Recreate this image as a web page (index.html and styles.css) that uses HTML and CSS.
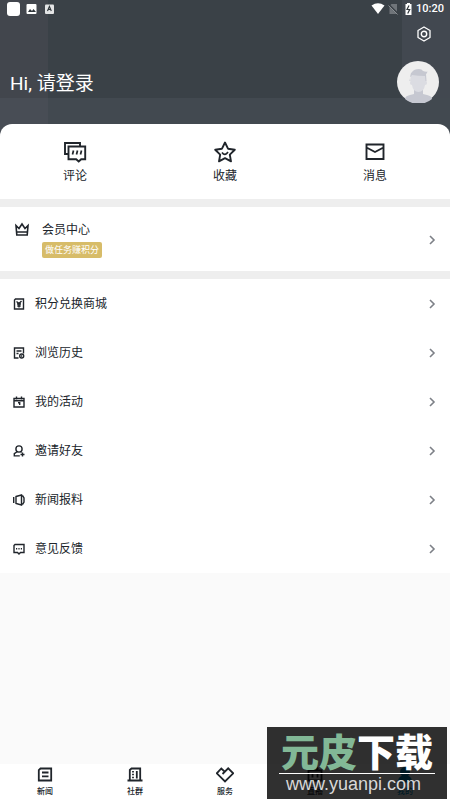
FILE: index.html
```html
<!DOCTYPE html>
<html lang="zh-CN">
<head>
<meta charset="utf-8">
<meta name="viewport" content="width=device-width, initial-scale=1">
<title>我的</title>
<link rel="stylesheet" href="styles.css">
</head>
<body>
<svg class="defs" aria-hidden="true">
  <symbol id="chevron" viewBox="0 0 8 10"><path d="M2 1l4 4-4 4" fill="none" stroke="#7d8087" stroke-width="1.6"/></symbol>
</svg>
<header class="hero">
  <div class="status">
    <svg width="60" height="18" viewBox="0 0 60 18" aria-hidden="true">
      <rect x="7" y="2" width="13" height="14" rx="3" fill="#fff"/>
      <rect x="26.500" y="4" width="10" height="10" rx="1" fill="#fff"/>
      <path d="M28 12l2-3 2 2 1.500-2 2.500 3z" fill="#30363b"/>
      <rect x="45" y="4.500" width="9" height="9.500" rx="1" fill="#e4e5e6"/>
      <path d="M47.500 11L49.400 6.500l1.900 4.500M48.200 9.500h2.400" fill="none" stroke="#30363b" stroke-width="1.100"/>
    </svg>
    <div class="status-right">
      <svg width="44" height="14" viewBox="0 0 44 14" aria-hidden="true">
        <path d="M3.500 3.500Q10-.8 16.500 3.500L10 12z" fill="#fff"/>
        <path d="M21.500 4l2-2H29v10h-7.500z" fill="#70757a"/>
        <path d="M20.500 2.500l9.500 9.500" stroke="#3b4147" stroke-width="2"/><path d="M20.500 3.500l9 9" stroke="#8b8f93"/>
        <path d="M37.500 2H39V1h3v1h1.500v11h-6z" fill="#fff"/>
        <path d="M41 3.500l-2 4h2.700l-2 4" fill="none" stroke="#30363b" stroke-width="1.200"/>
      </svg>
      <span>10:20</span>
    </div>
  </div>
  <div class="tools">
    <button class="plain" aria-label="设置">
      <svg width="16" height="16" viewBox="0 0 16 16"><path d="M8 1l6 3.500v7L8 15l-6-3.500v-7z" fill="none" stroke="#fff" stroke-width="1.300" stroke-linejoin="round"/><circle cx="8" cy="8" r="2.700" fill="none" stroke="#fff" stroke-width="1.400"/></svg>
    </button>
  </div>
  <div class="profile">
    <a class="login" href="#">Hi, 请登录</a>
    <svg class="avatar" width="42" height="42" viewBox="0 0 42 42" role="img" aria-label="头像">
      <circle cx="21" cy="21" r="21" fill="#eee"/>
      <path d="M8 38q0-3 5-4l4-1v-5h9v5l4 1q5 1 5 4A21 21 0 0 1 8 38z" fill="#c6c8d1"/>
      <path d="M14 14h15v6q1 0 1 2t-2 2q-1 7-6.500 7T15 24q-2 0-2-2t1-2z" fill="#dbdce2"/>
      <path d="M13.500 20q-1-7 1.500-9 2-3 7-3 3 0 4 2 3 1 4.500.500-.500 2-1.500 2.500l.5 7h-1l-.500-5q-7 0-13-1-2 2-2.500 6z" fill="#c6c8d1"/>
    </svg>
  </div>
</header>
<main>
  <nav class="shortcuts" aria-label="快捷入口">
    <a href="#">
      <svg width="24" height="22" viewBox="0 0 24 22"><path d="M5 13H2V2h15v3M5.500 5.500h16.700v12.700h-4l-2.500 2.300-2.500-2.300H5.500z" fill="none" stroke="#20252b" stroke-width="1.900"/><path d="M10.500 9.500l-1 4M14.500 9.500l-1 4M18.500 9.500l-1 4" stroke="#20252b" stroke-width="1.700"/></svg>
      <span>评论</span>
    </a>
    <a href="#">
      <svg width="24" height="22" viewBox="0 0 24 22"><path d="M12 1.500l3 6.200 6.800 1-5 4.900 1.200 6.700-6-3.100-6 3.100 1.200-6.700-5-4.900 6.800-1z" fill="none" stroke="#20252b" stroke-width="1.900" stroke-linejoin="round"/><path d="M9 11.500q3 4 6-.5" fill="none" stroke="#20252b" stroke-width="1.700"/></svg>
      <span>收藏</span>
    </a>
    <a href="#">
      <svg width="24" height="22" viewBox="0 0 24 22"><path d="M3.500 3.500h17v14.500h-17zM3.500 6.500l8.500 4.500L20.500 6.500" fill="none" stroke="#20252b" stroke-width="1.900"/></svg>
      <span>消息</span>
    </a>
  </nav>
  <a class="member" href="#">
    <svg class="crown" width="16" height="16" viewBox="0 0 16 16"><path d="M2 4.500l3 3 3-4.500 3 4.500 3-3-.8 9.500H2.800zM2.500 11h11" fill="none" stroke="#20252b" stroke-width="1.600"/></svg>
    <span class="member-text"><span>会员中心</span><span class="tag">做任务赚积分</span></span>
    <svg class="chevron"><use href="#chevron"/></svg>
  </a>
  <ul class="menu">
    <li><a href="#"><svg class="icon" viewBox="0 0 12 12"><path d="M2.500 1h8v10h-9V2z"/><path d="M3.500 3.500L6 5.500l2.500-2.500M6 5.500v4M4 6h4M4.300 8h3.400"/></svg><span>积分兑换商城</span><svg class="chevron"><use href="#chevron"/></svg></a></li>
    <li><a href="#"><svg class="icon" viewBox="0 0 12 12"><path d="M5.500 11H1.500V1h9v5.500M3.500 4h5M3.500 6.500h2"/><circle cx="8.700" cy="9" r="2"/><path d="M8 8.500l1 1"/></svg><span>浏览历史</span><svg class="chevron"><use href="#chevron"/></svg></a></li>
    <li><a href="#"><svg class="icon" viewBox="0 0 12 12"><path d="M1 2.500h10v8.500H1zM1 4.700h10M3.500.5v3M8.500.5v3M5 6.700h1.700V9"/></svg><span>我的活动</span><svg class="chevron"><use href="#chevron"/></svg></a></li>
    <li><a href="#"><svg class="icon" viewBox="0 0 12 12"><circle cx="6" cy="4" r="3.100"/><path d="M4.500 6.500L1.300 8.700v2.200h5.500M8 7l.5.500M9.500 7.500v4M7.500 9.500h4"/></svg><span>邀请好友</span><svg class="chevron"><use href="#chevron"/></svg></a></li>
    <li><a href="#"><svg class="icon" viewBox="0 0 12 12"><path d="M.7 3v6M3 2.500L8.500 1v10L3 9.500zM8.500 2h1.300L11 4v4L9.800 10H8.500"/></svg><span>新闻报料</span><svg class="chevron"><use href="#chevron"/></svg></a></li>
    <li><a href="#"><svg class="icon" viewBox="0 0 12 12"><path d="M2 1.500h9v8H7.500L6 11 4.500 9.500H1v-7z"/><path d="M3 5.800h1.200M5.400 5.800h1.200M7.800 5.800H9"/></svg><span>意见反馈</span><svg class="chevron"><use href="#chevron"/></svg></a></li>
  </ul>
</main>
<nav class="tabs" aria-label="主导航">
  <a href="#"><svg viewBox="0 0 18 18"><path d="M4.500 2.500H15.200v12H2.800v-10.300z"/><path d="M6 6.500h6.500M6 10.300h6.500"/></svg><span>新闻</span></a>
  <a href="#"><svg viewBox="0 0 18 18"><path d="M1.500 14.500h15M3.800 14.500V4l1.700-1.500h8.700v12"/><path d="M7 5v1.500M7 7.800v1.500M7 10.700v1.500M10.800 5v7.500"/></svg><span>社群</span></a>
  <a href="#"><svg viewBox="0 0 18 18"><path d="M6.500 8l5.700-5.700 5 5L9 15.500 .8 7.300l4.500-4.800L8.500 5.500"/></svg><span>服务</span></a>
  <a href="#"><svg viewBox="0 0 18 18"><path d="M2.500 4.500h13v10h-13zM6 1.500l1.500 3M12 1.500l-1.500 3M6.500 7.500v4M11.500 7.500v4"/></svg><span>直播</span></a>
  <a class="active" href="#" aria-current="page"><svg viewBox="0 0 18 18"><circle cx="9" cy="6" r="4"/><path d="M3 15.500q0-5 6-5t6 5z"/></svg><span>我的</span></a>
</nav>
<aside class="watermark">
  <div class="brand"><span>元皮</span>下载</div>
  <div class="site">www.yuanpi.com</div>
</aside>
</body>
</html>
```
FILE: styles.css
```css
* { box-sizing: border-box; }
body {
  margin: 0;
  min-height: 100vh;
  display: flex;
  flex-direction: column;
  position: relative;
  background: #fafafa;
  color: #20252b;
  font: 12px/18px Roboto, "Noto Sans CJK SC", sans-serif;
}
a { color: inherit; text-decoration: none; }
svg { display: block; flex: none; }
.defs { position: absolute; width: 0; height: 0; }

.hero {
  padding-bottom: 34px;
  color: #fff;
  background:
    linear-gradient(#484d55, #484d55) 0 98px / 48px 100% no-repeat,
    linear-gradient(#424950, #424950) 0 98px / 100% 100% no-repeat,
    linear-gradient(#42464d, #42464d) 0 0 / 48px 100% no-repeat,
    linear-gradient(#424850, #424850) 100% 0 / 48px 100% no-repeat,
    #3a4147;
}
.status {
  display: flex;
  justify-content: space-between;
  height: 18px;
}
.status-right {
  display: flex;
  align-items: center;
  gap: 4px;
  padding-right: 6px;
  font-size: 11px;
  font-weight: 500;
}
.tools {
  display: flex;
  justify-content: flex-end;
  padding: 8px 18px 0;
}
.plain { padding: 0; border: 0; background: none; }
.profile {
  display: flex;
  justify-content: space-between;
  align-items: center;
  margin-top: 19px;
  padding: 0 11px 0 10px;
}
.login {
  padding-top: 3px;
  font-size: 19px;
  line-height: 28px;
}

main { margin-top: -13px; }
.shortcuts {
  display: grid;
  grid-template-columns: repeat(3, 1fr);
  padding: 17px 0 14px;
  background: #fff;
  border-radius: 12px 12px 0 0;
}
.shortcuts a {
  display: flex;
  flex-direction: column;
  align-items: center;
  gap: 4px;
}
.member {
  display: flex;
  align-items: center;
  padding: 14px 14px 13px;
  border: solid #eee;
  border-width: 8px 0;
  background: #fff;
}
.crown { align-self: flex-start; }
.member-text {
  flex: 1;
  display: flex;
  flex-direction: column;
  align-items: flex-start;
  gap: 3px;
  margin-left: 12px;
}
.tag {
  padding: 0 3px;
  border-radius: 2px;
  background: #d7bc69;
  color: #fff;
  font-size: 9px;
  line-height: 16px;
}
.chevron { width: 8px; height: 10px; }
.menu {
  margin: 0;
  padding: 0;
  list-style: none;
  background: #fff;
}
.menu a {
  display: flex;
  align-items: center;
  gap: 10px;
  height: 49px;
  padding: 0 14px 0 13px;
}
.menu span { flex: 1; }
.icon {
  width: 12px;
  height: 12px;
  fill: none;
  stroke: #20252b;
  stroke-width: 1.4;
}

.tabs {
  display: grid;
  grid-template-columns: repeat(5, 1fr);
  margin-top: auto;
  padding: 2px 0;
  background: #fff;
}
.tabs a {
  display: flex;
  flex-direction: column;
  align-items: center;
  gap: 2px;
  font-size: 8px;
  line-height: 12px;
  font-weight: 500;
}
.tabs svg {
  width: 18px;
  height: 18px;
  fill: none;
  stroke: #20252b;
  stroke-width: 1.8;
}
.tabs .active { color: #0088bb; }
.tabs .active svg { fill: #0088bb; stroke: #0088bb; }

.watermark {
  position: absolute;
  right: 3px;
  bottom: 1px;
  width: 180px;
  height: 72px;
  padding: 4px 12px;
  background: rgba(0, 0, 0, 0.81);
  color: #fff;
}
.brand {
  padding-bottom: 4px;
  border-bottom: 1px solid #fff;
  font: 900 38px/38px "Noto Sans CJK SC", sans-serif;
  text-align: center;
  white-space: nowrap;
}
.brand span { color: #82b896; }
.site {
  padding-left: 7px;
  color: #d8d8d8;
  font: 18px/20px "Liberation Sans", sans-serif;
}
```
